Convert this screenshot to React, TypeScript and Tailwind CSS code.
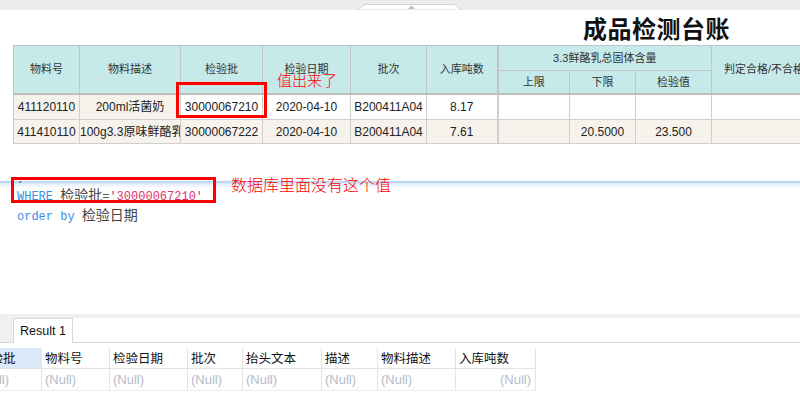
import React from 'react'

const headTop = ['物料号', '物料描述', '检验批', '检验日期', '批次', '入库吨数']

const rows = [
  {
    cells: ['411120110', '200ml活菌奶', '30000067210', '2020-04-10', 'B200411A04', '8.17', '', '', '', ''],
    shade: [true, true, false, false, false, false, false, false, false, false],
  },
  {
    cells: ['411410110', '100g3.3原味鲜酪乳', '30000067222', '2020-04-10', 'B200411A04', '7.61', '', '20.5000', '23.500', ''],
    shade: [true, true, true, true, true, true, true, true, true, true],
  },
]

const gridCols = [
  { title: '检验批', w: 'w-[67px]', active: true },
  { title: '物料号', w: 'w-[68px]' },
  { title: '检验日期', w: 'w-[78px]' },
  { title: '批次', w: 'w-[55px]' },
  { title: '抬头文本', w: 'w-[79px]' },
  { title: '描述', w: 'w-[56px]' },
  { title: '物料描述', w: 'w-[78px]' },
  { title: '入库吨数', w: 'w-[80px]', right: true },
]

export default function App() {
  return (
    <div className="relative w-[800px] h-[394px] overflow-hidden bg-white font-['Liberation_Sans','Noto_Sans_CJK_SC',sans-serif] text-[#222]">
      {/* window strip */}
      <div className="h-[10px] bg-[#ececec] flex pl-[358px]">
        <svg width="104" height="6" viewBox="0 0 104 6" className="mt-[4px]">
          <polygon points="0,6 7,0.5 97,0.5 104,6" fill="#fff" stroke="#d4d4d4" strokeWidth="1" />
          <polygon points="50,5 53.5,1.5 57,5" fill="#bcbcbc" />
        </svg>
      </div>

      {/* title */}
      <div className="h-[35px] pl-[583px] flex items-center">
        <span className="text-[24px] font-bold leading-none tracking-[0.5px] text-[#111] font-['Noto_Sans_CJK_SC',sans-serif]">
          成品检测台账
        </span>
      </div>

      {/* report sheet */}
      <div className="overflow-hidden">
        <table className="ml-[13px] table-fixed border-collapse w-[828px] text-[12px]">
          <colgroup>
            <col className="w-[66px]" />
            <col className="w-[101px]" />
            <col className="w-[82px]" />
            <col className="w-[88px]" />
            <col className="w-[76px]" />
            <col className="w-[71px]" />
            <col className="w-[72px]" />
            <col className="w-[66px]" />
            <col className="w-[76px]" />
            <col className="w-[130px]" />
          </colgroup>
          <thead>
            <tr className="h-[25px]">
              {headTop.map((h) => (
                <th key={h} rowSpan={2} className="bg-[#c6e9e9] border border-[#c4c4c4] font-normal text-[11px] text-[#333] text-center">
                  {h}
                </th>
              ))}
              <th colSpan={3} className="bg-[#c6e9e9] border border-[#c4c4c4] border-l-2 font-normal text-[11px] text-[#333] text-center">
                3.3鲜酪乳总固体含量
              </th>
              <th rowSpan={2} className="bg-[#c6e9e9] border border-[#c4c4c4] font-normal text-[11px] text-[#333] text-left pl-[12px] whitespace-nowrap">
                判定合格/不合格
              </th>
            </tr>
            <tr className="h-[23px]">
              {['上限', '下限', '检验值'].map((h, i) => (
                <th
                  key={h}
                  className={`bg-[#c6e9e9] border border-[#c4c4c4] font-normal text-[11px] text-[#333] text-center ${i === 0 ? 'border-l-2' : ''}`}
                >
                  {h}
                </th>
              ))}
            </tr>
          </thead>
          <tbody>
            {rows.map((r, ri) => (
              <tr key={ri} className={ri === 0 ? 'h-[26px] border-t-2 border-[#bdbdbd]' : 'h-[24px]'}>
                {r.cells.map((c, ci) => (
                  <td
                    key={ci}
                    className={`border border-[#cfcfcf] text-center whitespace-nowrap overflow-hidden ${ci === 6 ? 'border-l-2' : ''} ${
                      r.shade[ci] ? 'bg-[#f6f2ec]' : 'bg-white'
                    }`}
                  >
                    {c}
                  </td>
                ))}
              </tr>
            ))}
          </tbody>
        </table>
      </div>

      {/* sql editor */}
      <div className="h-[37px]" />
      <div className="h-[42px] overflow-hidden bg-[linear-gradient(to_bottom,#afcdf0_0px,#e4eefb_3px,#ffffff_7px)] pl-[17px] font-['Liberation_Mono',monospace] text-[12px] leading-[17px]">
        <div className="mt-[-12px] text-[#444]">)</div>
        <div className="whitespace-pre">
          <span className="text-[#3b8ee3]">WHERE </span>
          <span className="text-[14px] text-[#444] font-['Noto_Sans_CJK_SC',sans-serif]">检验批</span>
          <span className="text-[#555]">=</span>
          <span className="text-[#e0336b]">'30000067210'</span>
        </div>
        <div className="whitespace-pre">
          <span className="text-[#3b8ee3]">order by </span>
          <span className="text-[14px] text-[#444] font-['Noto_Sans_CJK_SC',sans-serif]">检验日期</span>
        </div>
      </div>
      <div className="h-[91px]" />

      {/* result pane */}
      <div className="h-[4px] bg-[#efefef]" />
      <div className="flex h-[25px]">
        <div className="w-[13px] bg-[#f0f0f0] border-b border-[#d6d6d6]" />
        <div className="w-[60px] border-x border-t border-[#d6d6d6] bg-white flex items-center pl-[6px] text-[12.5px] text-[#111]">
          Result 1
        </div>
        <div className="flex-1 border-b border-[#d6d6d6]" />
      </div>
      <div className="h-[5px]" />
      <div className="flex ml-[-25px]">
        {gridCols.map((c) => (
          <div key={c.title} className={`${c.w} shrink-0 border-r border-[#e4e4e4]`}>
            <div
              className={`h-[21px] border-b border-[#e4e4e4] flex items-center pl-[3px] text-[12.5px] text-[#111] font-['Noto_Sans_CJK_SC',sans-serif] ${
                c.active ? 'bg-[#dbe9f8]' : 'bg-white'
              }`}
            >
              {c.title}
            </div>
            <div
              className={`h-[22px] border-b border-[#ececec] flex items-center text-[13px] text-[#b6bacb] ${
                c.right ? 'justify-end pr-[4px]' : 'pl-[3px]'
              }`}
            >
              (Null)
            </div>
          </div>
        ))}
      </div>

      {/* annotations */}
      <div className="absolute left-[176px] top-[82px] w-[91px] h-[36px] border-[3px] border-[#ff0000]" />
      <div className="absolute left-[277px] top-[71px] text-[15px] leading-[18px] text-[#ff0000] font-light font-['Noto_Sans_CJK_SC',sans-serif]">
        值出来了
      </div>
      <div className="absolute left-[11px] top-[177px] w-[205px] h-[26px] border-[3px] border-[#ff0000]" />
      <div className="absolute left-[231px] top-[174px] text-[16px] leading-[20px] text-[#ff0000] font-light font-['Noto_Sans_CJK_SC',sans-serif]">
        数据库里面没有这个值
      </div>
    </div>
  )
}
